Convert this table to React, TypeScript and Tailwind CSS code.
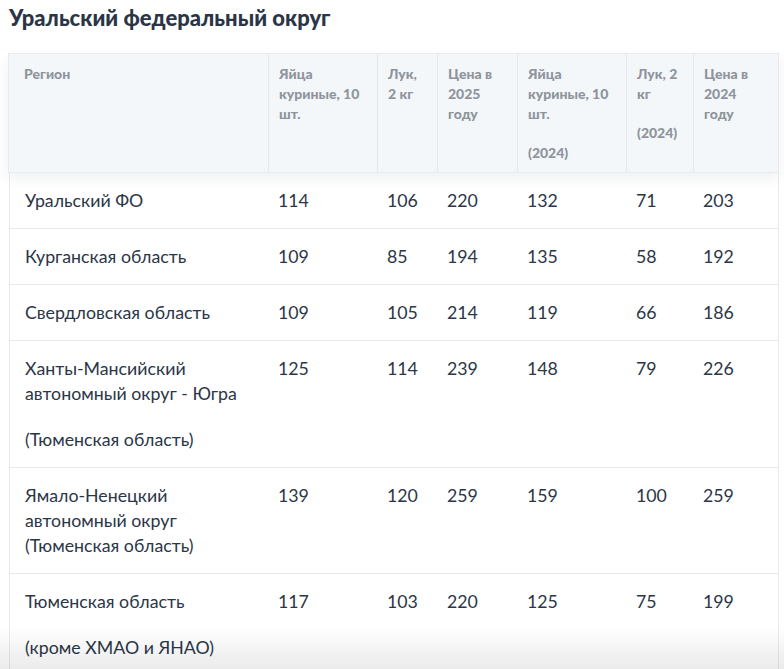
import React from "react";

const widths = ["w-[259px]", "w-[109px]", "w-[60px]", "w-[80px]", "w-[109px]", "w-[67px]", "w-[87px]"];

const headers: string[][] = [
  ["Регион"],
  ["Яйца куриные, 10 шт."],
  ["Лук, 2 кг"],
  ["Цена в 2025 году"],
  ["Яйца куриные, 10 шт.", "(2024)"],
  ["Лук, 2 кг", "(2024)"],
  ["Цена в 2024 году"],
];

const rows: string[][][] = [
  [["Уральский ФО"], ["114"], ["106"], ["220"], ["132"], ["71"], ["203"]],
  [["Курганская область"], ["109"], ["85"], ["194"], ["135"], ["58"], ["192"]],
  [["Свердловская область"], ["109"], ["105"], ["214"], ["119"], ["66"], ["186"]],
  [
    ["Ханты-Мансийский автономный округ - Югра", "(Тюменская область)"],
    ["125"], ["114"], ["239"], ["148"], ["79"], ["226"],
  ],
  [
    ["Ямало-Ненецкий автономный округ (Тюменская область)"],
    ["139"], ["120"], ["259"], ["159"], ["100"], ["259"],
  ],
  [
    ["Тюменская область", "(кроме ХМАО и ЯНАО)"],
    ["117"], ["103"], ["220"], ["125"], ["75"], ["199"],
  ],
];

export default function App() {
  return (
    <div
      className="relative min-h-[669px] bg-white"
      style={{ fontFamily: "Lato, 'Noto Sans', sans-serif" }}
    >
      <div className="pl-[9px] pt-[5px]">
        <h1 className="text-[22px] leading-[26px] font-black text-[#2a3546]">
          Уральский федеральный округ
        </h1>
      </div>
      <div className="mt-[22px] ml-[8px] w-[771px]">
        <div className="relative z-10 flex h-[120px] border border-[#e6ebf0] bg-[#f4f7fa] shadow-[0_6px_12px_rgba(40,60,80,0.07)]">
          {headers.map((h, i) => (
            <div
              key={i}
              className={`${widths[i]} shrink-0 ${i > 0 ? "border-l border-[#e3e8ed] pl-[10px]" : "pl-[15px]"} pr-[12px] pt-[10px] text-[14px] leading-[20px] font-black text-[#8e949c]`}
            >
              {h.map((p, j) => (
                <p key={j} className={j > 0 ? "mt-[19px]" : ""}>
                  {p}
                </p>
              ))}
            </div>
          ))}
        </div>
        <div className="ml-px border-x border-[#e6ebf0]">
          {rows.map((r, ri) => (
            <div key={ri} className="flex border-b border-[#e6ebf0]">
              {r.map((c, ci) => (
                <div
                  key={ci}
                  className={`${ci === 0 ? "w-[257px] pl-[15px] pr-[10px]" : `${widths[ci]} pl-[11px]`} shrink-0 pt-[15px] pb-[14.67px] text-[17.75px] leading-[25.33px] text-[#2b3647]`}
                >
                  {c.map((p, j) => (
                    <p key={j} className={j > 0 ? "mt-[20px]" : ""}>
                      {p}
                    </p>
                  ))}
                </div>
              ))}
            </div>
          ))}
        </div>
      </div>
      <div className="pointer-events-none fixed inset-x-0 bottom-0 h-[42px] bg-gradient-to-b from-[rgba(0,0,0,0)] to-[rgba(0,0,0,0.08)]" />
    </div>
  );
}
